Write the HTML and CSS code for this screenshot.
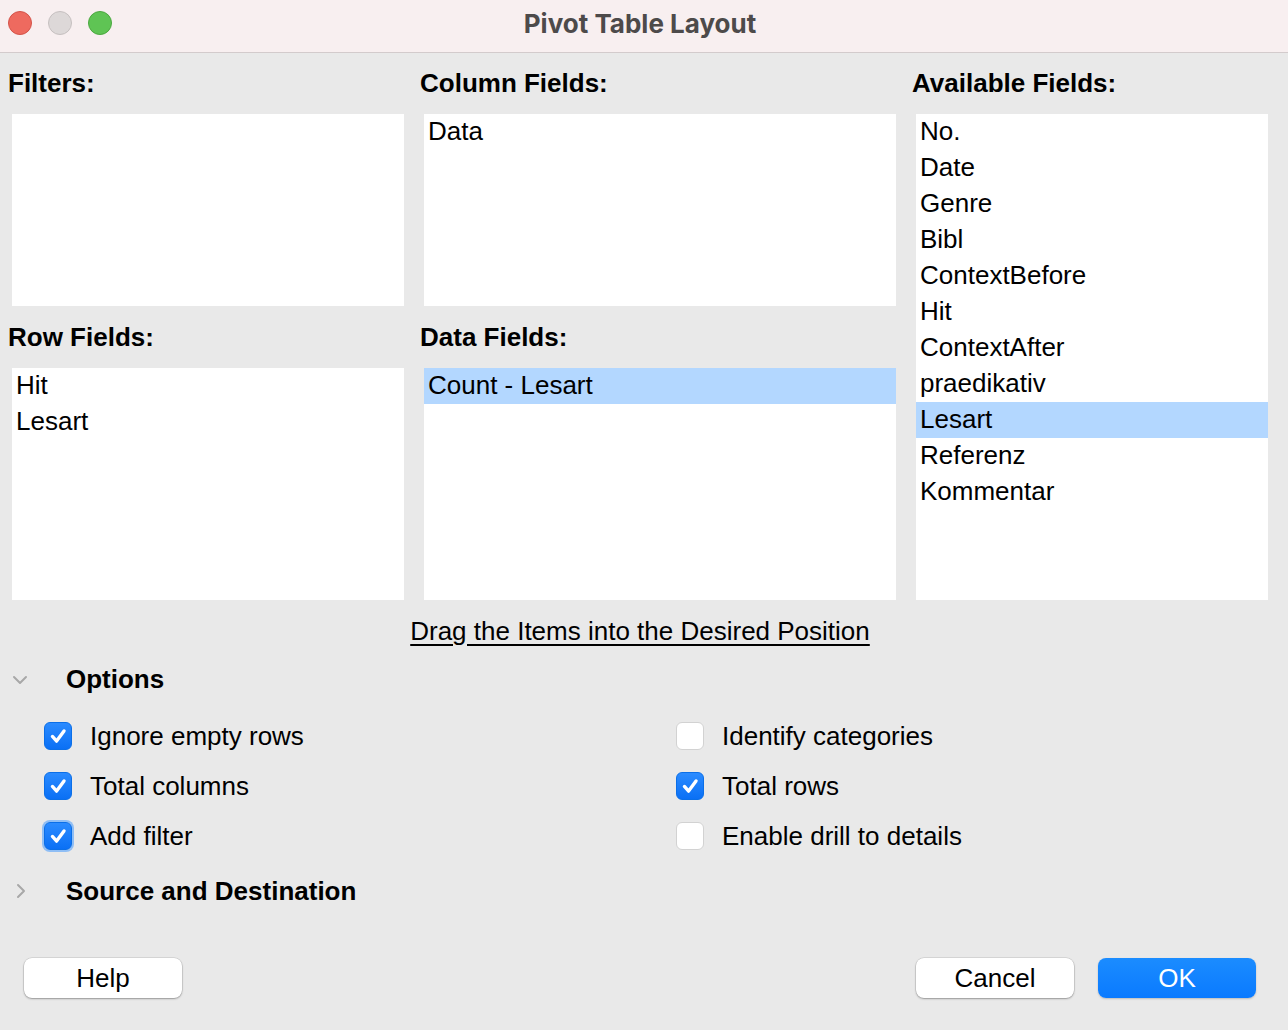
FILE: index.html
```html
<!DOCTYPE html>
<html>
<head>
<meta charset="utf-8">
<title>Pivot Table Layout</title>
<link rel="stylesheet" href="styles.css">
</head>
<body>
<div class="window">
  <div class="titlebar">
    <div class="lights">
      <span class="light red"></span>
      <span class="light gray"></span>
      <span class="light green"></span>
    </div>
    <div class="title">Pivot Table Layout</div>
  </div>
  <div class="content">
    <div class="fields">
      <div class="label l-filters">Filters:</div>
      <div class="label l-columns">Column Fields:</div>
      <div class="label l-avail">Available Fields:</div>
      <div class="box b-filters"></div>
      <div class="box b-columns"><div class="item">Data</div></div>
      <div class="box b-avail">
        <div class="item">No.</div>
        <div class="item">Date</div>
        <div class="item">Genre</div>
        <div class="item">Bibl</div>
        <div class="item">ContextBefore</div>
        <div class="item">Hit</div>
        <div class="item">ContextAfter</div>
        <div class="item">praedikativ</div>
        <div class="item sel">Lesart</div>
        <div class="item">Referenz</div>
        <div class="item">Kommentar</div>
      </div>
      <div class="label l-rows">Row Fields:</div>
      <div class="label l-data">Data Fields:</div>
      <div class="box b-rows">
        <div class="item">Hit</div>
        <div class="item">Lesart</div>
      </div>
      <div class="box b-data"><div class="item sel">Count - Lesart</div></div>
    </div>
    <div class="hint"><span>Drag the Items into the Desired Position</span></div>
    <div class="section">
      <svg class="chev" width="16" height="10" viewBox="0 0 16 10"><path d="M2 2 L8 8 L14 2" fill="none" stroke="#a8a8a8" stroke-width="2" stroke-linecap="round" stroke-linejoin="round"/></svg>
      <span class="section-title">Options</span>
    </div>
    <div class="options">
      <label class="opt"><span class="cb on"><svg width="28" height="28" viewBox="0 0 28 28"><path d="M8 14.5 L12.5 19.5 L20.5 8.5" fill="none" stroke="#fff" stroke-width="3.6" stroke-linecap="round" stroke-linejoin="round"/></svg></span>Ignore empty rows</label>
      <label class="opt"><span class="cb"></span>Identify categories</label>
      <label class="opt"><span class="cb on"><svg width="28" height="28" viewBox="0 0 28 28"><path d="M8 14.5 L12.5 19.5 L20.5 8.5" fill="none" stroke="#fff" stroke-width="3.6" stroke-linecap="round" stroke-linejoin="round"/></svg></span>Total columns</label>
      <label class="opt"><span class="cb on"><svg width="28" height="28" viewBox="0 0 28 28"><path d="M8 14.5 L12.5 19.5 L20.5 8.5" fill="none" stroke="#fff" stroke-width="3.6" stroke-linecap="round" stroke-linejoin="round"/></svg></span>Total rows</label>
      <label class="opt"><span class="cb on focus"><svg width="28" height="28" viewBox="0 0 28 28"><path d="M8 14.5 L12.5 19.5 L20.5 8.5" fill="none" stroke="#fff" stroke-width="3.6" stroke-linecap="round" stroke-linejoin="round"/></svg></span>Add filter</label>
      <label class="opt"><span class="cb"></span>Enable drill to details</label>
    </div>
    <div class="section section-src">
      <svg class="chev-r" width="10" height="16" viewBox="0 0 10 16"><path d="M2 2 L8 8 L2 14" fill="none" stroke="#a8a8a8" stroke-width="2" stroke-linecap="round" stroke-linejoin="round"/></svg>
      <span class="section-title">Source and Destination</span>
    </div>
    <div class="buttons">
      <button class="btn">Help</button>
      <div class="right">
        <button class="btn">Cancel</button>
        <button class="btn primary">OK</button>
      </div>
    </div>
  </div>
</div>
</body>
</html>
```

FILE: styles.css
```css
* { box-sizing: border-box; }
html, body { margin: 0; padding: 0; }
body {
  width: 1288px;
  height: 1030px;
  background: #e9e9e9;
  font-family: "Liberation Sans", Arial, sans-serif;
  color: #000;
  overflow: hidden;
}
.window { width: 1288px; height: 1030px; background: #e9e9e9; }
.titlebar {
  height: 53px;
  background: #f8eff0;
  border-bottom: 1px solid #d3cbcc;
  position: relative;
  display: flex;
  align-items: center;
  justify-content: center;
}
.lights {
  position: absolute;
  left: 8px;
  top: 11px;
  display: flex;
  gap: 16px;
}
.light {
  width: 24px;
  height: 24px;
  border-radius: 50%;
  display: block;
}
.light.red { background: #ee6a5f; border: 1px solid #d45349; }
.light.gray { background: #ddd8d8; border: 1px solid #c6c0c0; }
.light.green { background: #5fc454; border: 1px solid #4ba83f; }
.title {
  font-family: Inter, "Liberation Sans", sans-serif;
  font-weight: 700;
  font-size: 26px;
  color: #4d4a4a;
  margin-top: -6px;
  margin-right: 8px;
}
.content { padding: 12px 16px 0 8px; }
.fields {
  display: grid;
  grid-template-columns: 400px 480px 360px;
  grid-template-rows: 36px 192px 36px 232px;
  column-gap: 12px;
  row-gap: 13px;
}
.label {
  font-weight: bold;
  font-size: 26px;
  line-height: 36px;
}
.l-filters { grid-column: 1; grid-row: 1; }
.l-columns { grid-column: 2; grid-row: 1; }
.l-avail { grid-column: 3; grid-row: 1; }
.l-rows { grid-column: 1; grid-row: 3; }
.l-data { grid-column: 2; grid-row: 3; }
.box {
  background: #fff;
  margin: 0 4px;
  overflow: hidden;
}
.b-filters { grid-column: 1; grid-row: 2; }
.b-columns { grid-column: 2; grid-row: 2; }
.b-avail { grid-column: 3; grid-row: 2 / 5; }
.b-rows { grid-column: 1; grid-row: 4; }
.b-data { grid-column: 2; grid-row: 4; }
.item {
  height: 36px;
  line-height: 35px;
  font-size: 26px;
  padding-left: 4px;
  white-space: nowrap;
}
.item.sel { background: #b3d7ff; }
.hint {
  margin-top: 13px;
  text-align: center;
  font-size: 26px;
  line-height: 36px;
}
.hint span { text-decoration: underline; text-underline-offset: 4px; }
.section {
  display: flex;
  align-items: center;
  height: 36px;
  margin-top: 12px;
}
.chev { margin-left: 4px; margin-right: 38px; margin-top: 2px; }
.chev-r { margin-left: 8px; margin-right: 40px; }
.section-title { font-weight: bold; font-size: 26px; }
.options {
  display: grid;
  grid-template-columns: 632px 1fr;
  grid-auto-rows: 50px;
  margin-top: 14px;
  padding-left: 36px;
}
.opt {
  display: flex;
  align-items: center;
  font-size: 26px;
}
.cb {
  width: 28px;
  height: 28px;
  border-radius: 6px;
  background: #fff;
  border: 1px solid #d2d2d2;
  margin-right: 18px;
  display: flex;
  align-items: center;
  justify-content: center;
  flex: none;
}
.cb.on {
  background: linear-gradient(#2b8bff, #0a70f5);
  border-color: #0b6fe8;
}
.cb.focus { box-shadow: 0 0 0 2px #8fbef5; }
.section-src { margin-top: 12px; }
.buttons {
  display: flex;
  justify-content: space-between;
  margin-top: 49px;
  padding: 0 16px 0 16px;
}
.right { display: flex; gap: 24px; }
.btn {
  width: 158px;
  height: 40px;
  border-radius: 8px;
  border: none;
  background: #fff;
  box-shadow: 0 0 0 0.5px rgba(0,0,0,0.15), 0 1px 2px rgba(0,0,0,0.3);
  font-family: "Liberation Sans", Arial, sans-serif;
  font-size: 26px;
  color: #000;
  padding: 0;
}
.btn.primary {
  background: linear-gradient(#1b8cff, #0a7aff);
  color: #fff;
  box-shadow: 0 1px 2px rgba(0,0,0,0.2);
}
```
